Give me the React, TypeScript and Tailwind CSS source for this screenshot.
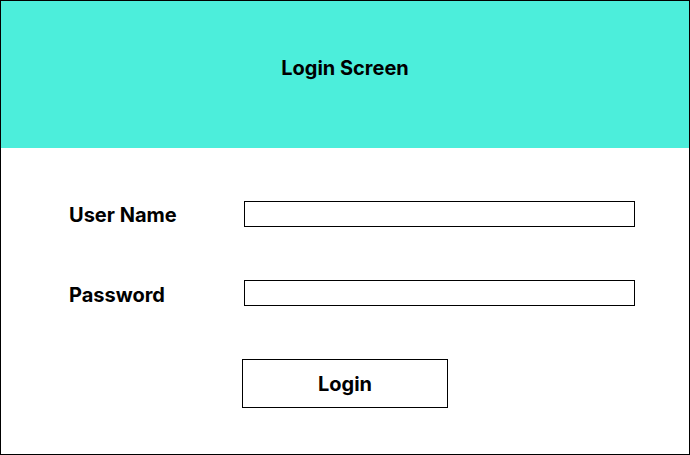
export default function App() {
  return (
    <div
      className="w-[690px] h-[455px] border border-black bg-white flex flex-col text-black"
      style={{ fontFamily: "Inter, 'Noto Sans', sans-serif" }}
    >
      {/* Header */}
      <div className="h-[147px] bg-[#4ceedb] flex justify-center pt-[53px]">
        <h1 className="text-[20px] font-bold leading-[28px]">Login Screen</h1>
      </div>

      {/* Form */}
      <div className="flex flex-col pt-[53px] pl-[68px]">
        <div className="flex items-center h-[26px]">
          <label className="w-[175px] text-[20px] font-bold leading-[28px] pt-[2px]">User Name</label>
          <input type="text" className="w-[391px] h-[26px] border border-black outline-none px-2" />
        </div>
        <div className="flex items-center h-[26px] mt-[53px]">
          <label className="w-[175px] text-[20px] font-bold leading-[28px] pt-[4px]">Password</label>
          <input type="password" className="w-[391px] h-[26px] border border-black outline-none px-2" />
        </div>
        <div className="mt-[53px] pl-[173px]">
          <button className="w-[206px] h-[49px] border border-black text-[20px] font-bold bg-white">
            Login
          </button>
        </div>
      </div>
    </div>
  );
}
